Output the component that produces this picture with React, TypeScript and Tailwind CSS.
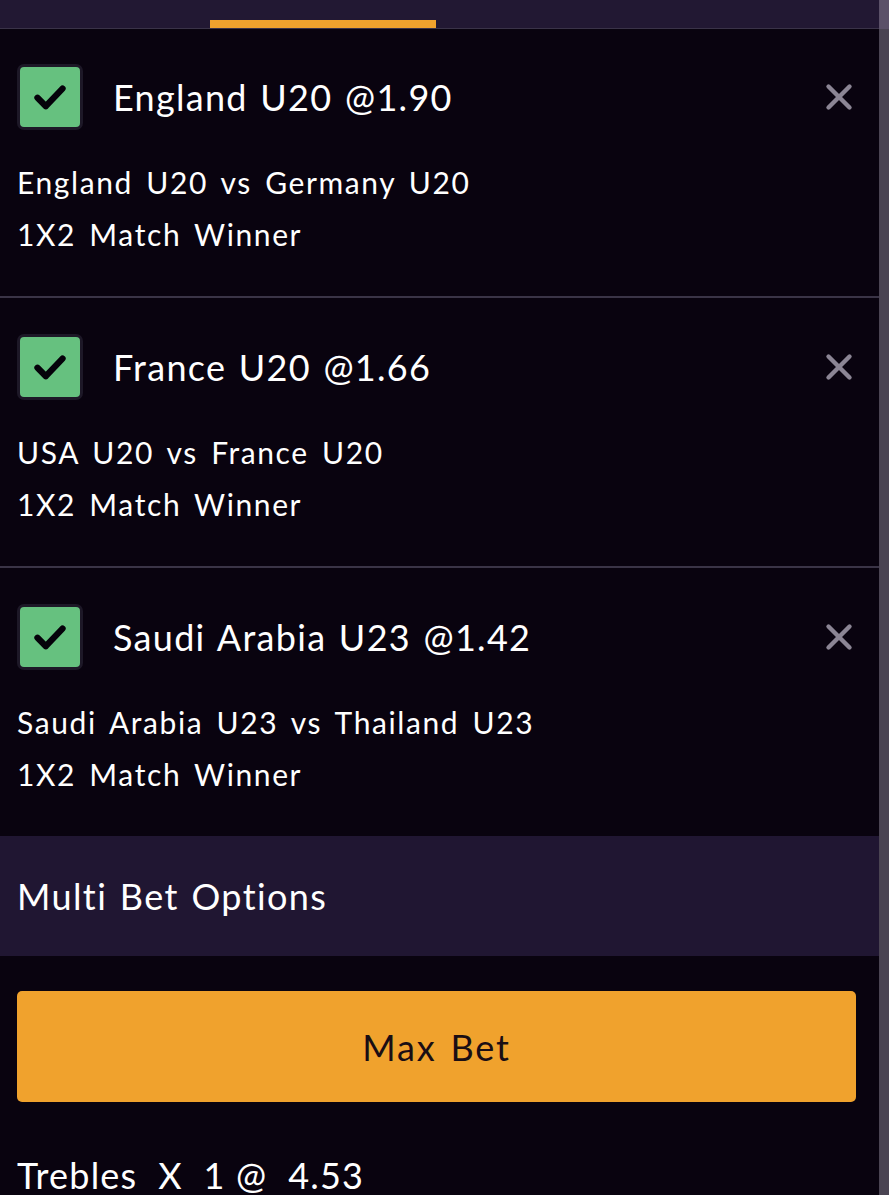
import { X } from 'lucide-react'

const bets = [
  { pick: 'England U20 @1.90', match: 'England U20 vs Germany U20' },
  { pick: 'France U20 @1.66', match: 'USA U20 vs France U20' },
  { pick: 'Saudi Arabia U23 @1.42', match: 'Saudi Arabia U23 vs Thailand U23' },
]

function CheckBox() {
  return (
    <div className="w-[66px] h-[66px] shrink-0 rounded-[7px] border-[3px] border-[#1d1827] bg-[#66c17f] flex items-center justify-center">
      <svg width="40" height="40" viewBox="0 0 24 24" fill="none">
        <path d="M4.5 12.5l5 5L19.5 7" stroke="#05020a" strokeWidth="3.8" strokeLinecap="round" strokeLinejoin="round" />
      </svg>
    </div>
  )
}

export default function App() {
  return (
    <main
      className="relative w-full h-[1195px] overflow-hidden bg-[#09030f] text-white"
      style={{ fontFamily: 'Lato, "Noto Sans", sans-serif' }}
    >
      {/* Tabs */}
      <div className="h-[29px] bg-[#221833] border-b border-[#3a3348] flex items-end">
        <div className="ml-[210px] w-[226px] h-[8px] bg-[#f0a22d]" />
      </div>

      {/* Bet slip */}
      {bets.map((b, i) => (
        <div
          key={b.pick}
          className={`pl-[17px] pr-[33px] pb-[36px] ${i === 0 ? 'pt-[35px]' : 'pt-[36px]'} ${i < bets.length - 1 ? 'border-b-2 border-[#3a3446]' : ''}`}
        >
          <div className="flex items-center">
            <CheckBox />
            <div className="ml-[30px] flex-1 text-[36px] leading-none tracking-[1.3px] [word-spacing:2px]">{b.pick}</div>
            <X className="w-[42px] h-[42px] -mr-[4px] text-[#8b8594]" strokeWidth={2.5} />
          </div>
          <div className="mt-[26px] text-[30px] leading-[52px] tracking-[1.6px] [word-spacing:4px]">
            <div>{b.match}</div>
            <div>1X2 Match Winner</div>
          </div>
        </div>
      ))}

      {/* Multi bet options */}
      <div className="h-[120px] bg-[#201632] pl-[17px] flex items-center text-[36px] tracking-[1.4px] [word-spacing:2px]">
        Multi Bet Options
      </div>

      <div className="pl-[17px] pr-[33px] pt-[35px]">
        <button className="w-full h-[111px] rounded-[5px] bg-[#f0a22d] text-[#1a0e14] text-[36px] tracking-[1.8px] [word-spacing:3px]">
          Max Bet
        </button>
        <div className="mt-[46px] text-[36px] whitespace-pre tracking-[1.2px]">Trebles  X  1 @  4.53</div>
      </div>

      {/* scrollbar */}
      <div className="absolute top-0 right-0 w-[10px] h-full bg-[#4a4452]" />
      <div className="absolute top-0 right-0 w-[10px] h-[29px] bg-[#5b5168]" />
    </main>
  )
}
